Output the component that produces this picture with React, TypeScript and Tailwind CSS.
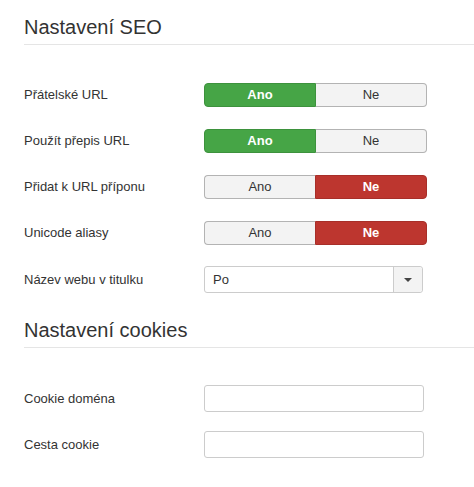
import React from 'react'

type Toggle = { label: string; value: boolean }

const toggles: Toggle[] = [
    { label: 'Přátelské URL', value: true },
    { label: 'Použít přepis URL', value: true },
    { label: 'Přidat k URL příponu', value: false },
    { label: 'Unicode aliasy', value: false },
]

const SectionTitle = ({ children }: { children: React.ReactNode }) => (
    <h2 className="pt-[15px] pb-[5px] text-[20px] leading-6 font-normal text-[#333] border-b border-[#e5e5e5]">
        {children}
    </h2>
)

const ToggleGroup = ({ value }: { value: boolean }) => (
    <div className="flex h-6 w-[223px] text-[13px]">
        {value ? (
            <>
                <div className="flex-1 flex items-center justify-center rounded-l-[4px] bg-[#46a546] border border-[#3d923d] text-white font-bold">
                    Ano
                </div>
                <div className="flex-1 flex items-center justify-center rounded-r-[4px] bg-[#f3f3f3] border border-l-0 border-[#b3b3b3] text-[#333]">
                    Ne
                </div>
            </>
        ) : (
            <>
                <div className="flex-1 flex items-center justify-center rounded-l-[4px] bg-[#f3f3f3] border border-r-0 border-[#b3b3b3] text-[#333]">
                    Ano
                </div>
                <div className="flex-1 flex items-center justify-center rounded-r-[4px] bg-[#bd362f] border border-[#a72f29] text-white font-bold">
                    Ne
                </div>
            </>
        )}
    </div>
)

const Label = ({ children }: { children: React.ReactNode }) => (
    <div className="w-[180px] shrink-0 text-[13px] text-[#333]">{children}</div>
)

export default function App() {
    return (
        <div className="min-h-screen bg-white pl-6 font-['Liberation_Sans',Arial,sans-serif]">
            <SectionTitle>Nastavení SEO</SectionTitle>

            <div className="mt-[38px] flex flex-col gap-[22px]">
                {toggles.map((t) => (
                    <div key={t.label} className="flex items-center">
                        <Label>{t.label}</Label>
                        <ToggleGroup value={t.value} />
                    </div>
                ))}
            </div>

            {/* Site name select */}
            <div className="mt-[21px] flex items-center">
                <Label>Název webu v titulku</Label>
                <div className="flex h-[27px] w-[219px] rounded-[3px] border border-[#ccc] bg-white text-[13px] text-[#333]">
                    <div className="flex-1 flex items-center pl-2">Po</div>
                    <div className="w-[29px] flex items-center justify-center border-l border-[#ccc] bg-[#f3f3f3] rounded-r-[3px]">
                        <svg width="8" height="4" viewBox="0 0 8 4">
                            <path d="M0 0 L8 0 L4 4 Z" fill="#444" />
                        </svg>
                    </div>
                </div>
            </div>

            <div className="mt-[10px]">
                <SectionTitle>Nastavení cookies</SectionTitle>
            </div>

            <div className="mt-[37px] flex flex-col gap-[19px]">
                {['Cookie doména', 'Cesta cookie'].map((label) => (
                    <div key={label} className="flex items-center">
                        <Label>{label}</Label>
                        <input
                            type="text"
                            className="h-[27px] w-[220px] rounded-[3px] border border-[#ccc] bg-white px-2 text-[13px] outline-none"
                        />
                    </div>
                ))}
            </div>
        </div>
    )
}
